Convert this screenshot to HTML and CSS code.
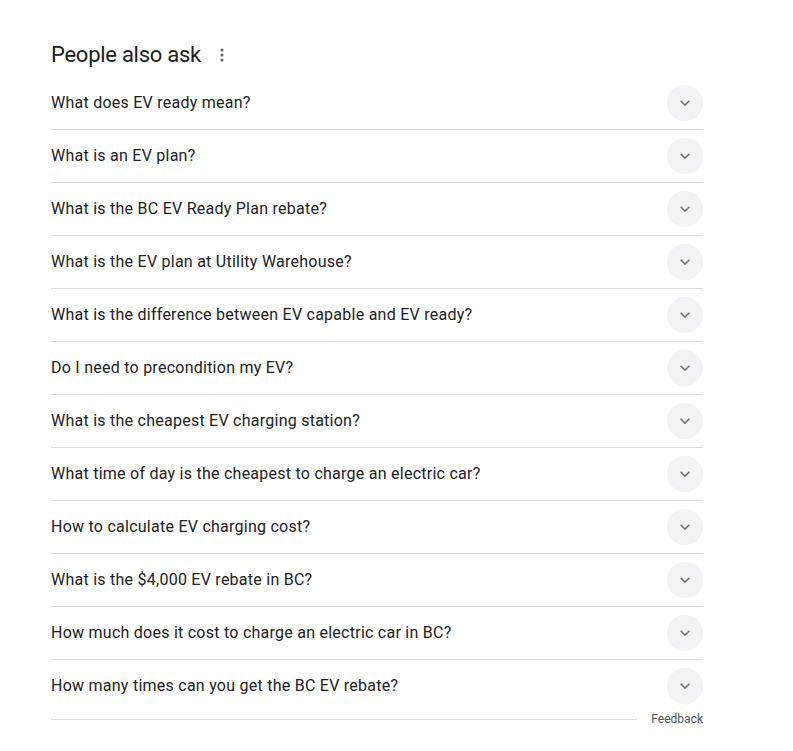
FILE: index.html
```html
<!DOCTYPE html>
<html>
<head>
<meta charset="utf-8">
<link rel="stylesheet" href="styles.css">
</head>
<body>
<div class="paa">
  <div class="header">
    <h2 class="title">People also ask</h2>
    <span class="more" aria-label="More options">
      <svg width="4" height="14" viewBox="0 0 4 14"><circle cx="2" cy="2" r="1.5"/><circle cx="2" cy="7" r="1.5"/><circle cx="2" cy="12" r="1.5"/></svg>
    </span>
  </div>
  <div class="list">
    <div class="row"><span class="q">What does EV ready mean?</span><span class="btn"><svg class="chev" viewBox="0 0 24 24"><path d="M7.41 8.59L12 13.17l4.59-4.58L18 10l-6 6-6-6 1.41-1.41z"/></svg></span></div>
    <div class="row"><span class="q">What is an EV plan?</span><span class="btn"><svg class="chev" viewBox="0 0 24 24"><path d="M7.41 8.59L12 13.17l4.59-4.58L18 10l-6 6-6-6 1.41-1.41z"/></svg></span></div>
    <div class="row"><span class="q">What is the BC EV Ready Plan rebate?</span><span class="btn"><svg class="chev" viewBox="0 0 24 24"><path d="M7.41 8.59L12 13.17l4.59-4.58L18 10l-6 6-6-6 1.41-1.41z"/></svg></span></div>
    <div class="row"><span class="q">What is the EV plan at Utility Warehouse?</span><span class="btn"><svg class="chev" viewBox="0 0 24 24"><path d="M7.41 8.59L12 13.17l4.59-4.58L18 10l-6 6-6-6 1.41-1.41z"/></svg></span></div>
    <div class="row"><span class="q">What is the difference between EV capable and EV ready?</span><span class="btn"><svg class="chev" viewBox="0 0 24 24"><path d="M7.41 8.59L12 13.17l4.59-4.58L18 10l-6 6-6-6 1.41-1.41z"/></svg></span></div>
    <div class="row"><span class="q">Do I need to precondition my EV?</span><span class="btn"><svg class="chev" viewBox="0 0 24 24"><path d="M7.41 8.59L12 13.17l4.59-4.58L18 10l-6 6-6-6 1.41-1.41z"/></svg></span></div>
    <div class="row"><span class="q">What is the cheapest EV charging station?</span><span class="btn"><svg class="chev" viewBox="0 0 24 24"><path d="M7.41 8.59L12 13.17l4.59-4.58L18 10l-6 6-6-6 1.41-1.41z"/></svg></span></div>
    <div class="row"><span class="q">What time of day is the cheapest to charge an electric car?</span><span class="btn"><svg class="chev" viewBox="0 0 24 24"><path d="M7.41 8.59L12 13.17l4.59-4.58L18 10l-6 6-6-6 1.41-1.41z"/></svg></span></div>
    <div class="row"><span class="q">How to calculate EV charging cost?</span><span class="btn"><svg class="chev" viewBox="0 0 24 24"><path d="M7.41 8.59L12 13.17l4.59-4.58L18 10l-6 6-6-6 1.41-1.41z"/></svg></span></div>
    <div class="row"><span class="q">What is the $4,000 EV rebate in BC?</span><span class="btn"><svg class="chev" viewBox="0 0 24 24"><path d="M7.41 8.59L12 13.17l4.59-4.58L18 10l-6 6-6-6 1.41-1.41z"/></svg></span></div>
    <div class="row"><span class="q">How much does it cost to charge an electric car in BC?</span><span class="btn"><svg class="chev" viewBox="0 0 24 24"><path d="M7.41 8.59L12 13.17l4.59-4.58L18 10l-6 6-6-6 1.41-1.41z"/></svg></span></div>
    <div class="row last"><span class="q">How many times can you get the BC EV rebate?</span><span class="btn"><svg class="chev" viewBox="0 0 24 24"><path d="M7.41 8.59L12 13.17l4.59-4.58L18 10l-6 6-6-6 1.41-1.41z"/></svg></span></div>
  </div>
  <div class="footer">
    <div class="rule"></div>
    <a class="feedback">Feedback</a>
  </div>
</div>
</body>
</html>
```
FILE: styles.css
```css
html, body {
  margin: 0;
  padding: 0;
  background: #fff;
}
body {
  font-family: Roboto, "Liberation Sans", Arial, sans-serif;
  color: #202124;
}
.paa {
  width: 652px;
  margin-left: 51px;
  padding-top: 38px;
}
.header {
  display: flex;
  align-items: flex-start;
  height: 39px;
}
.title {
  margin: 3px 0 0 0;
  font-family: Roboto, "Liberation Sans", sans-serif;
  font-weight: 400;
  font-size: 22px;
  line-height: 28px;
  letter-spacing: -0.27px;
  color: #202124;
}
.more {
  display: flex;
  margin-left: 19px;
  margin-top: 10px;
  fill: #5f6368;
}
.list {
  display: flex;
  flex-direction: column;
}
.row {
  display: flex;
  align-items: center;
  justify-content: space-between;
  height: 52px;
  border-bottom: 1px solid #dadce0;
}
.row.last {
  border-bottom: none;
}
.q {
  font-size: 16px;
  line-height: 24px;
  letter-spacing: 0.25px;
  color: #202124;
}
.btn {
  width: 36px;
  height: 36px;
  border-radius: 50%;
  background: #f1f3f4;
  display: flex;
  align-items: center;
  justify-content: center;
}
.chev {
  width: 20px;
  height: 20px;
  fill: #70757a;
}
.footer {
  display: flex;
  align-items: center;
  height: 14px;
}
.rule {
  flex: 1;
  border-top: 1px solid #dadce0;
  margin-right: 14px;
}
.feedback {
  font-size: 12px;
  line-height: 14px;
  color: #4d5156;
}
```
